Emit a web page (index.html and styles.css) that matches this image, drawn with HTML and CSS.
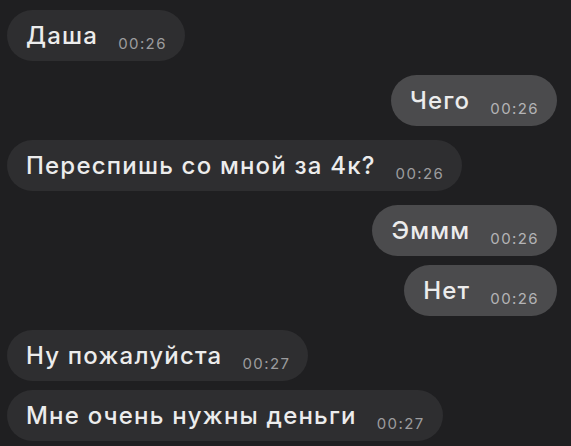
FILE: index.html
```html
<!DOCTYPE html>
<html lang="ru">
<head>
  <meta charset="UTF-8">
  <meta name="viewport" content="width=device-width, initial-scale=1.0">
  <title>Чат</title>
  <link rel="stylesheet" href="styles.css">
</head>
<body>
  <div class="chat">
    <div class="msg in"><span class="text">Даша</span><span class="time">00:26</span></div>
    <div class="msg out"><span class="text">Чего</span><span class="time">00:26</span></div>
    <div class="msg in"><span class="text">Переспишь со мной за 4к?</span><span class="time">00:26</span></div>
    <div class="msg out"><span class="text">Эммм</span><span class="time">00:26</span></div>
    <div class="msg out same"><span class="text">Нет</span><span class="time">00:26</span></div>
    <div class="msg in"><span class="text">Ну пожалуйста</span><span class="time">00:27</span></div>
    <div class="msg in same"><span class="text">Мне очень нужны деньги</span><span class="time">00:27</span></div>
  </div>
</body>
</html>
```

FILE: styles.css
```css
/* Reset */
* {
  margin: 0;
  padding: 0;
  box-sizing: border-box;
}

body {
  height: 100vh;
  background: #1f1f21;
  font-family: 'Inter', 'Noto Sans', sans-serif;
  color: #ececec;
  overflow: hidden;
}

/* Chat column */
.chat {
  display: flex;
  flex-direction: column;
  gap: 14px;
  padding: 10px 14px 0 7px;
}

.msg {
  display: flex;
  align-items: baseline;
  height: 51px;
  line-height: 51px;
  padding: 0 18px 0 19px;
  border-radius: 26px;
  white-space: nowrap;
}

.msg.same {
  margin-top: -5px;
}

.msg.in {
  align-self: flex-start;
  background: #2e2e30;
}

.msg.out {
  align-self: flex-end;
  background: #4b4b4d;
}

.text {
  font-size: 24px;
  font-weight: 500;
  letter-spacing: 1.2px;
}

.time {
  font-size: 15px;
  letter-spacing: 1.4px;
  margin-left: 20px;
  color: #9c9c9e;
  position: relative;
  top: 5px;
}

.msg.out .time {
  color: #b4b4b6;
}
```
